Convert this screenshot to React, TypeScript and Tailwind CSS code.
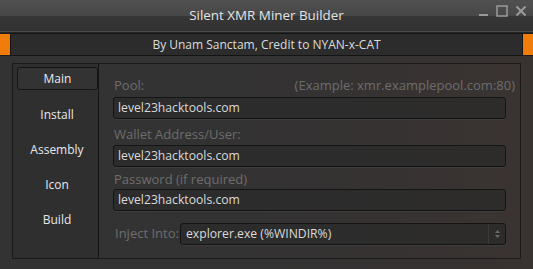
import React from 'react';

const tabs = ['Install', 'Assembly', 'Icon', 'Build'];

const Label: React.FC<{ text: string; hint?: string; className?: string }> = ({ text, hint, className }) => (
  <div className={`flex justify-between h-[18px] leading-[18px] text-[13px] text-[#6d6d6d] pl-[1px] pr-[5px] ${className ?? ''}`}>
    <span>{text}</span>
    {hint && <span>{hint}</span>}
  </div>
);

const Input: React.FC<{ value: string; className?: string }> = ({ value, className }) => (
  <div
    className={`h-[22px] w-[393px] rounded-[3px] border border-[#141414] bg-[#2b2b2b]/80 shadow-[0_1px_0_#3d3d3d] pl-[4px] flex items-center text-[12.2px] text-[#dadada] ${className ?? ''}`}
  >
    {value}
  </div>
);

export default function App() {
  return (
    <div
      className="w-[533px] h-[269px] bg-[#333333] flex flex-col overflow-hidden select-none"
      style={{ fontFamily: '"Open Sans", "Noto Sans", sans-serif' }}
    >
      {/* title bar: glossy top half */}
      <div className="relative h-[33px] flex flex-col border-b border-[#252525]">
        <div className="h-[16px] bg-gradient-to-b from-[#505050] to-[#474747]" />
        <div className="flex-1 bg-gradient-to-b from-[#363636] to-[#323232] border-b border-[#4a4a4a]" />
        <div className="absolute inset-0 flex items-center justify-center">
          <span className="text-[13.4px] text-[#e4e4e4] -mt-[2px]">Silent XMR Miner Builder</span>
        </div>
        <div className="absolute right-[6px] top-[5px] flex items-center gap-[7px] text-[#9a9a9a]">
          <svg width="11" height="12" viewBox="0 0 11 12">
            <rect x="1" y="9" width="9" height="2" fill="currentColor" />
          </svg>
          <svg width="12" height="12" viewBox="0 0 12 12">
            <rect x="1" y="1" width="10" height="10" fill="none" stroke="currentColor" strokeWidth="1.5" />
          </svg>
          <svg width="12" height="12" viewBox="0 0 12 12">
            <path d="M1.5 1.5 L10.5 10.5 M10.5 1.5 L1.5 10.5" stroke="currentColor" strokeWidth="2" />
          </svg>
        </div>
      </div>

      {/* credit strip */}
      <div className="h-[23px] flex">
        <div className="w-[10px] bg-[#f07c0c] border-y border-[#1c1c1c]" />
        <div className="flex-1 bg-[#2c2c2c] border border-[#141414] flex items-center justify-center text-[12px] text-[#dcdcdc]">
          By Unam Sanctam, Credit to NYAN-x-CAT
        </div>
        <div className="w-[10px] bg-[#f07c0c] border-y border-[#1c1c1c]" />
      </div>

      {/* body */}
      <div className="flex-1 pl-[12px] pr-[12px] pt-[7px] pb-[10px] bg-gradient-to-r from-[#333333] via-[#333333] to-[#383230]">
        <div className="h-full flex border border-[#1a1a1a] bg-[#2f2f2f]">
          <div className="w-[85px] flex flex-col pt-[3px] pl-[4px]">
            <div className="w-[81px] h-[23px] flex items-center justify-center rounded-[3px] border border-[#151515] bg-[#333333] text-[12px] text-[#e6e8ee]">
              Main
            </div>
            <div className="flex flex-col mt-[7px]">
              {tabs.map((t) => (
                <div key={t} className="w-[80px] h-[35px] flex items-center justify-center text-[12px] text-[#e6e8ee]">
                  {t}
                </div>
              ))}
            </div>
          </div>
          <div className="flex-1 border-l border-[#151515] bg-gradient-to-r from-[#333333] via-[#343232] to-[#3a3331] pl-[14px] pt-[12px] flex flex-col">
            <Label text="Pool:" hint="(Example: xmr.examplepool.com:80)" />
            <Input value="level23hacktools.com" className="mt-[3px]" />
            <Label text="Wallet Address/User:" className="mt-[6px]" />
            <Input value="level23hacktools.com" className="mt-[2px]" />
            <Label text="Password (if required)" className="mt-[3px]" />
            <Input value="level23hacktools.com" className="mt-[1px]" />
            <div className="flex items-center mt-[12px]">
              <span className="w-[67px] pl-[2px] text-[13px] text-[#6d6d6d]">Inject Into:</span>
              <div className="h-[22px] w-[326px] rounded-[3px] border border-[#141414] bg-[#2b2b2b]/80 shadow-[0_1px_0_#3d3d3d] flex items-center text-[12.2px] text-[#dadada]">
                <span className="flex-1 pl-[5px]">explorer.exe (%WINDIR%)</span>
                <div className="w-[17px] h-full border-l border-[#3a3a3a] flex items-center justify-center">
                  <svg width="7" height="10" viewBox="0 0 7 10">
                    <path d="M3.5 1 L6 4 H1 Z M3.5 9 L6 6 H1 Z" fill="#6a6a6a" />
                  </svg>
                </div>
              </div>
            </div>
          </div>
        </div>
      </div>
    </div>
  );
}
